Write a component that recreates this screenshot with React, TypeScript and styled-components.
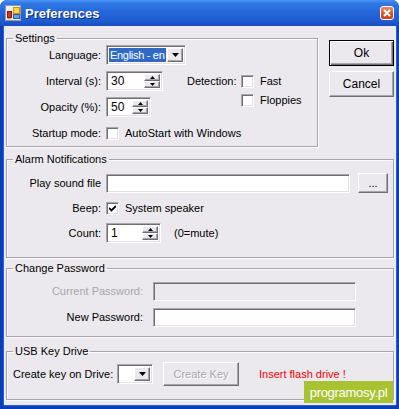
import React from 'react'
import styled, { createGlobalStyle, css } from 'styled-components'

const FACE = '#ebe9ed'

const GlobalStyle = createGlobalStyle`
  html, body {
    margin: 0;
    padding: 0;
    background: #ffffff;
  }
  body {
    font-family: 'Liberation Sans', Arial, sans-serif;
    font-size: 11px;
    line-height: 13px;
    color: #000;
  }
  * {
    box-sizing: border-box;
  }
`

// classic 3d borders
const sunken = css`
  border: 1px solid;
  border-color: #a7a6aa #ffffff #ffffff #a7a6aa;
  box-shadow: inset 1px 1px 0 #6f6e72, inset -1px -1px 0 #e2e0e5;
`

const raised = css`
  border: 1px solid;
  border-color: #ffffff #6f6e72 #6f6e72 #ffffff;
  box-shadow: inset -1px -1px 0 #a7a6aa;
  background: ${FACE};
`

const Window = styled.div`
  position: relative;
  width: 399px;
  height: 409px;
  display: flex;
  flex-direction: column;
  background: #0a3fb8;
  border-radius: 7px 7px 0 0;
  overflow: hidden;
`

const TitleBar = styled.div`
  flex: none;
  height: 26px;
  display: flex;
  align-items: center;
  gap: 4px;
  padding: 0 5px;
  background: linear-gradient(
    to bottom,
    #4c95f4 0%,
    #3079e6 12%,
    #2567da 45%,
    #1f5cd1 80%,
    #184cbf 100%
  );
`

const TitleText = styled.span`
  flex: 1;
  color: #fff;
  font-weight: bold;
  font-size: 13px;
  text-shadow: 1px 1px 0 #0c2a86;
`

const CloseButton = styled.div`
  width: 14px;
  height: 14px;
  border: 1px solid #fff;
  border-radius: 3px;
  background: linear-gradient(to bottom, #ec8a66, #d8532c 60%, #c4401c);
  display: flex;
  align-items: center;
  justify-content: center;
`

const Body = styled.div`
  flex: 1;
  margin: 0 3px 4px 4px;
  padding: 6px 2px 0 2px;
  background: ${FACE};
  display: flex;
  flex-direction: column;
  box-shadow: -1px 0 0 #2a62d6, 1px 0 0 #2a62d6, 0 1px 0 #2a62d6;
`

const TopRow = styled.div`
  display: flex;
  align-items: flex-start;
`

const ButtonColumn = styled.div`
  margin: 8px 0 0 11px;
  display: flex;
  flex-direction: column;
  gap: 5px;
`

const Group = styled.fieldset<{ $width?: number; $top?: number; $pad: string }>`
  margin: ${(p) => p.$top ?? 0}px 0 0 0;
  padding: ${(p) => p.$pad};
  width: ${(p) => (p.$width ? `${p.$width}px` : 'auto')};
  min-width: 0;
  border: 1px solid #a7a5ab;
  box-shadow: inset 1px 1px 0 #fbfafc, 1px 1px 0 #fbfafc;
`

const Legend = styled.legend`
  margin-left: 6px;
  padding: 0 2px;
  line-height: 13px;
`

const Label = styled.span<{ $disabled?: boolean }>`
  text-align: right;
  white-space: nowrap;
  color: ${(p) => (p.$disabled ? '#a7a6aa' : '#000')};
`

const SettingsGrid = styled.div`
  display: grid;
  grid-template-columns: 94px 76px 1fr;
  grid-auto-rows: 20px;
  row-gap: 6px;
  column-gap: 5px;
  align-items: center;
`

const AlarmGrid = styled.div`
  display: grid;
  grid-template-columns: 94px 1fr;
  grid-auto-rows: 20px;
  row-gap: 5px;
  column-gap: 5px;
  align-items: center;
`

const PasswordGrid = styled.div`
  display: grid;
  grid-template-columns: 136px 203px;
  grid-auto-rows: 19px;
  row-gap: 7px;
  column-gap: 10px;
  align-items: center;
`

const UsbRow = styled.div`
  display: grid;
  grid-template-columns: 104px 46px 86px auto;
  align-items: center;
  padding-left: 6px;
`

const Wide = styled.div`
  grid-column: 2 / 4;
  justify-self: start;
`

const Detection = styled.div`
  grid-column: 3;
  grid-row: 2 / span 2;
  align-self: start;
  display: flex;
  gap: 5px;
  padding-top: 4px;
`

const DetectionLabel = styled.span`
  width: 49px;
  text-align: right;
`

const CheckColumn = styled.div`
  display: flex;
  flex-direction: column;
  gap: 6px;
`

const CheckRow = styled.label`
  display: flex;
  align-items: center;
  gap: 6px;
  white-space: nowrap;
`

const CheckBox = styled.span`
  ${sunken}
  flex: none;
  width: 13px;
  height: 13px;
  background: #fff;
  display: inline-flex;
  align-items: center;
  justify-content: center;
`

const TextInput = styled.div<{ $width: number; $disabled?: boolean }>`
  ${sunken}
  width: ${(p) => p.$width}px;
  height: 19px;
  background: ${(p) => (p.$disabled ? FACE : '#fff')};
`

const InlineRow = styled.div<{ $gap: number }>`
  display: flex;
  align-items: center;
  gap: ${(p) => p.$gap}px;
`

const ComboBox = styled.div<{ $width: number }>`
  ${sunken}
  width: ${(p) => p.$width}px;
  height: 20px;
  padding: 2px;
  background: #fff;
  display: flex;
`

const ComboValue = styled.span<{ $selected?: boolean }>`
  flex: 1;
  margin-right: 1px;
  padding-left: 1px;
  line-height: 14px;
  letter-spacing: -0.3px;
  white-space: nowrap;
  overflow: hidden;
  color: #fff;
  background: ${(p) => (p.$selected ? '#316ac5' : 'transparent')};
`

const DropButton = styled.span`
  ${raised}
  width: 16px;
  display: flex;
  align-items: center;
  justify-content: center;
`

const SpinBox = styled.div<{ $width: number }>`
  ${sunken}
  width: ${(p) => p.$width}px;
  height: 20px;
  padding: 2px;
  background: #fff;
  display: flex;
`

const SpinValue = styled.span`
  flex: 1;
  padding-left: 2px;
  line-height: 15px;
  font-size: 12px;
`

const SpinButtons = styled.div`
  width: 16px;
  display: flex;
  flex-direction: column;
`

const SpinButton = styled.span`
  ${raised}
  flex: 1;
  display: flex;
  align-items: center;
  justify-content: center;
`

const Button = styled.div<{ $width: number; $height: number; $default?: boolean; $disabled?: boolean }>`
  ${raised}
  width: ${(p) => p.$width}px;
  height: ${(p) => p.$height}px;
  display: flex;
  align-items: center;
  justify-content: center;
  font-size: ${(p) => (p.$height > 24 ? 12 : 11)}px;
  color: ${(p) => (p.$disabled ? '#a7a6aa' : '#000')};
  text-shadow: ${(p) => (p.$disabled ? '1px 1px 0 #fff' : 'none')};
  ${(p) =>
    p.$default &&
    css`
      border: 1px solid #000;
      box-shadow: inset 1px 1px 0 #fff, inset -1px -1px 0 #6f6e72, inset -2px -2px 0 #a7a6aa;
    `}
`

const Warning = styled.span`
  padding-left: 10px;
  color: #f00;
  white-space: nowrap;
`

const Watermark = styled.div`
  position: absolute;
  right: 6px;
  bottom: 6px;
  width: 89px;
  height: 22px;
  background: #a8c232;
  color: #fff;
  font-size: 13px;
  letter-spacing: -0.3px;
  display: flex;
  align-items: center;
  justify-content: center;
`

const Arrow = ({ up }: { up?: boolean }) => (
  <svg width="7" height="4" viewBox="0 0 7 4">
    <path d={up ? 'M0 4 L3.5 0 L7 4 Z' : 'M0 0 L7 0 L3.5 4 Z'} fill="#000" />
  </svg>
)

const SmallArrow = ({ up }: { up?: boolean }) => (
  <svg width="5" height="3" viewBox="0 0 5 3">
    <path d={up ? 'M0 3 L2.5 0 L5 3 Z' : 'M0 0 L5 0 L2.5 3 Z'} fill="#000" />
  </svg>
)

const Spinner = ({ width, value }: { width: number; value: string }) => (
  <SpinBox $width={width}>
    <SpinValue>{value}</SpinValue>
    <SpinButtons>
      <SpinButton>
        <SmallArrow up />
      </SpinButton>
      <SpinButton>
        <SmallArrow />
      </SpinButton>
    </SpinButtons>
  </SpinBox>
)

const Check = ({ checked, children }: { checked?: boolean; children?: React.ReactNode }) => (
  <CheckRow>
    <CheckBox>
      {checked && (
        <svg width="7" height="7" viewBox="0 0 7 7">
          <path d="M0 3 L2.5 5.5 L7 1" stroke="#000" strokeWidth="1.8" fill="none" />
        </svg>
      )}
    </CheckBox>
    {children}
  </CheckRow>
)

const AppIcon = () => (
  <svg width="16" height="16" viewBox="0 0 16 16">
    <rect x="0.5" y="0.5" width="15" height="15" fill="#e9eef6" stroke="#8f9aae" />
    <rect x="2.5" y="6.5" width="4" height="6" fill="#d9301e" stroke="#7c1d12" />
    <rect x="8.5" y="2.5" width="6" height="6" fill="#ffd84a" stroke="#d18f00" />
    <rect x="8.5" y="9.5" width="6" height="4" fill="#6f9ee0" stroke="#2e5ca6" />
    <rect x="2.5" y="13" width="4" height="1.5" fill="#f1b232" />
  </svg>
)

const App: React.FC = () => {
  return (
    <Window>
      <GlobalStyle />
      <TitleBar>
        <AppIcon />
        <TitleText>Preferences</TitleText>
        <CloseButton>
          <svg width="8" height="8" viewBox="0 0 8 8">
            <path d="M1 1 L7 7 M7 1 L1 7" stroke="#fff" strokeWidth="2" />
          </svg>
        </CloseButton>
      </TitleBar>
      <Body>
        <TopRow>
          <Group $width={313} $pad="0 0 3px 0">
            <Legend>Settings</Legend>
            <SettingsGrid>
              <Label>Language:</Label>
              <Wide>
                <ComboBox $width={80}>
                  <ComboValue $selected>English - en</ComboValue>
                  <DropButton>
                    <Arrow />
                  </DropButton>
                </ComboBox>
              </Wide>
              <Label>Interval (s):</Label>
              <Spinner width={57} value="30" />
              <Detection>
                <DetectionLabel>Detection:</DetectionLabel>
                <CheckColumn>
                  <Check>Fast</Check>
                  <Check>Floppies</Check>
                </CheckColumn>
              </Detection>
              <Label>Opacity (%):</Label>
              <Spinner width={45} value="50" />
              <Label>Startup mode:</Label>
              <Wide>
                <Check>AutoStart with Windows</Check>
              </Wide>
            </SettingsGrid>
          </Group>
          <ButtonColumn>
            <Button $width={65} $height={26} $default>
              Ok
            </Button>
            <Button $width={65} $height={26}>
              Cancel
            </Button>
          </ButtonColumn>
        </TopRow>

        <Group $top={6} $pad="7px 0 14px 0">
          <Legend>Alarm Notifications</Legend>
          <AlarmGrid>
            <Label>Play sound file</Label>
            <InlineRow $gap={8}>
              <TextInput $width={244} />
              <Button $width={30} $height={20}>
                ...
              </Button>
            </InlineRow>
            <Label>Beep:</Label>
            <Check checked>System speaker</Check>
            <Label>Count:</Label>
            <InlineRow $gap={13}>
              <Spinner width={55} value="1" />
              <span>(0=mute)</span>
            </InlineRow>
          </AlarmGrid>
        </Group>

        <Group $top={4} $pad="7px 0 9px 0">
          <Legend>Change Password</Legend>
          <PasswordGrid>
            <Label $disabled>Current Password:</Label>
            <TextInput $width={203} $disabled />
            <Label>New Password:</Label>
            <TextInput $width={203} />
          </PasswordGrid>
        </Group>

        <Group $top={8} $pad="4px 0 13px 0">
          <Legend>USB Key Drive</Legend>
          <UsbRow>
            <span>Create key on Drive:</span>
            <ComboBox $width={36}>
              <ComboValue />
              <DropButton>
                <Arrow />
              </DropButton>
            </ComboBox>
            <Button $width={76} $height={24} $disabled>
              Create Key
            </Button>
            <Warning>Insert flash drive !</Warning>
          </UsbRow>
        </Group>
      </Body>
      <Watermark>programosy.pl</Watermark>
    </Window>
  )
}

export default App
